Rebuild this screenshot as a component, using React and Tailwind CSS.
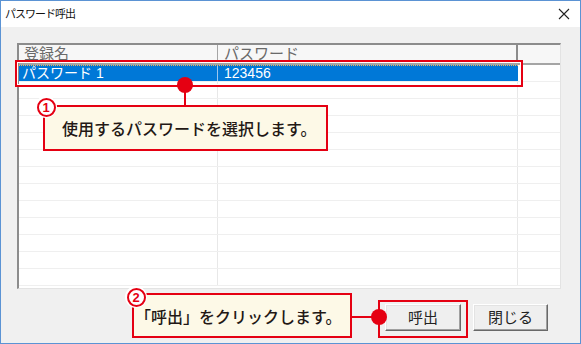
import React from 'react';

const RED = '#e50012';

// circled step number used by the callouts
const StepBadge = ({ n, className }) => (
  <div className={`absolute w-[22px] h-[22px] rounded-full bg-white flex items-center justify-center ${className}`}>
    <div className="w-[19px] h-[19px] rounded-full border-2 border-[#e50012] flex items-center justify-center text-[13px] font-bold leading-none text-[#e50012] font-['Liberation_Sans',sans-serif]">
      {n}
    </div>
  </div>
);

const WinButton = ({ label, w }) => (
  <button
    className={`${w} h-[27px] bg-[#efefef] border border-t-white border-l-white border-b-[#696969] border-r-[#696969] shadow-[inset_-1px_-1px_0_#a0a0a0,inset_1px_1px_0_#e3e3e3] text-[15px] text-[#222] leading-none flex items-center justify-center`}
  >
    {label}
  </button>
);

const App = () => {
  const emptyRows = Array.from({ length: 12 });

  return (
    <div className="relative w-[581px] h-[344px] flex flex-col border border-[#5b93d4] bg-[#f0f0f0] overflow-hidden font-['Liberation_Sans','Noto_Sans_CJK_JP',sans-serif]">
      {/* Title bar */}
      <div className="h-[26px] bg-white flex items-center justify-between pl-[4px] pr-[10px]">
        <span className="text-[11px] tracking-[-1px] text-[#111]">パスワード呼出</span>
        <svg width="12" height="12" viewBox="0 0 12 12">
          <path d="M1 1 L11 11 M11 1 L1 11" stroke="#222" strokeWidth="1.1" fill="none" />
        </svg>
      </div>

      {/* Body */}
      <div className="flex-1 flex flex-col pt-[16px] pl-[16px] pr-[19px]">
        {/* List view */}
        <div className="h-[246px] bg-white border-t-2 border-l-2 border-t-[#8c8c8c] border-l-[#8c8c8c] border-r border-b border-r-[#e3e3e3] border-b-[#e3e3e3] overflow-hidden">
          {/* Header */}
          <div className="flex h-[20px] bg-[#f7f7f7] border-b-2 border-[#a5a5a5] text-[15px] leading-[18px] text-[#6a6a6a]">
            <div className="w-[199px] border-r border-[#a5a5a5] pl-[5px]">登録名</div>
            <div className="w-[300px] border-r-2 border-[#8c8c8c] pl-[6px]">パスワード</div>
            <div className="flex-1" />
          </div>

          {/* Selected row */}
          <div className="flex h-[17px] border-b border-[#efefef]">
            <div className="flex w-[499px] bg-[#0078d7] border-t border-dotted border-[#f3b25a] text-white text-[14px] leading-[15px]">
              <div className="w-[199px] border-r border-[#9cc6ee] pl-[3px]">パスワード 1</div>
              <div className="flex-1 pl-[6px]">123456</div>
            </div>
            <div className="flex-1" />
          </div>

          {/* Empty rows */}
          {emptyRows.map((_, i) => (
            <div key={i} className="flex h-[17px] border-b border-[#efefef]">
              <div className="w-[199px] border-r border-[#e8e8e8]" />
              <div className="w-[300px] border-r border-[#e8e8e8]" />
              <div className="flex-1" />
            </div>
          ))}
        </div>

        {/* Buttons */}
        <div className="flex justify-end gap-[12px] mt-[15px] pr-[13px]">
          <WinButton label="呼出" w="w-[76px]" />
          <WinButton label="閉じる" w="w-[75px]" />
        </div>
      </div>

      {/* Callout 1: highlight of selected row */}
      <div className="absolute left-[14px] top-[59px] w-[508px] h-[27px] border-2 border-[#e50012] shadow-[inset_0_0_0_1px_white]" />
      <div className="absolute left-[183px] top-[84px] w-[2px] h-[21px]" style={{ background: RED }} />
      <div className="absolute left-[176px] top-[76px] w-[16px] h-[16px] rounded-full bg-[#e50012]" />
      <div className="absolute left-[42px] top-[104px] w-[285px] h-[46px] bg-[#fdf9e7] border-2 border-[#e50012] flex items-center pl-[17px] text-[16px] font-medium text-[#231815] font-['Noto_Sans_CJK_JP',sans-serif]">
        使用するパスワードを選択します。
      </div>
      <StepBadge n="1" className="left-[34px] top-[95px]" />

      {/* Callout 2: call button */}
      <div className="absolute left-[131px] top-[292px] w-[220px] h-[45px] bg-[#fdf9e7] border-2 border-[#e50012] flex items-center pl-[1px] text-[16px] font-medium text-[#231815] font-['Noto_Sans_CJK_JP',sans-serif]">
        「呼出」をクリックします。
      </div>
      <StepBadge n="2" className="left-[124px] top-[285px]" />
      <div className="absolute left-[350px] top-[315px] w-[24px] h-[2px] bg-[#e50012]" />
      <div className="absolute left-[370px] top-[308px] w-[16px] h-[16px] rounded-full bg-[#e50012]" />
      <div className="absolute left-[377px] top-[299px] w-[90px] h-[38px] border-2 border-[#e50012]" />
    </div>
  );
};

export default App;
